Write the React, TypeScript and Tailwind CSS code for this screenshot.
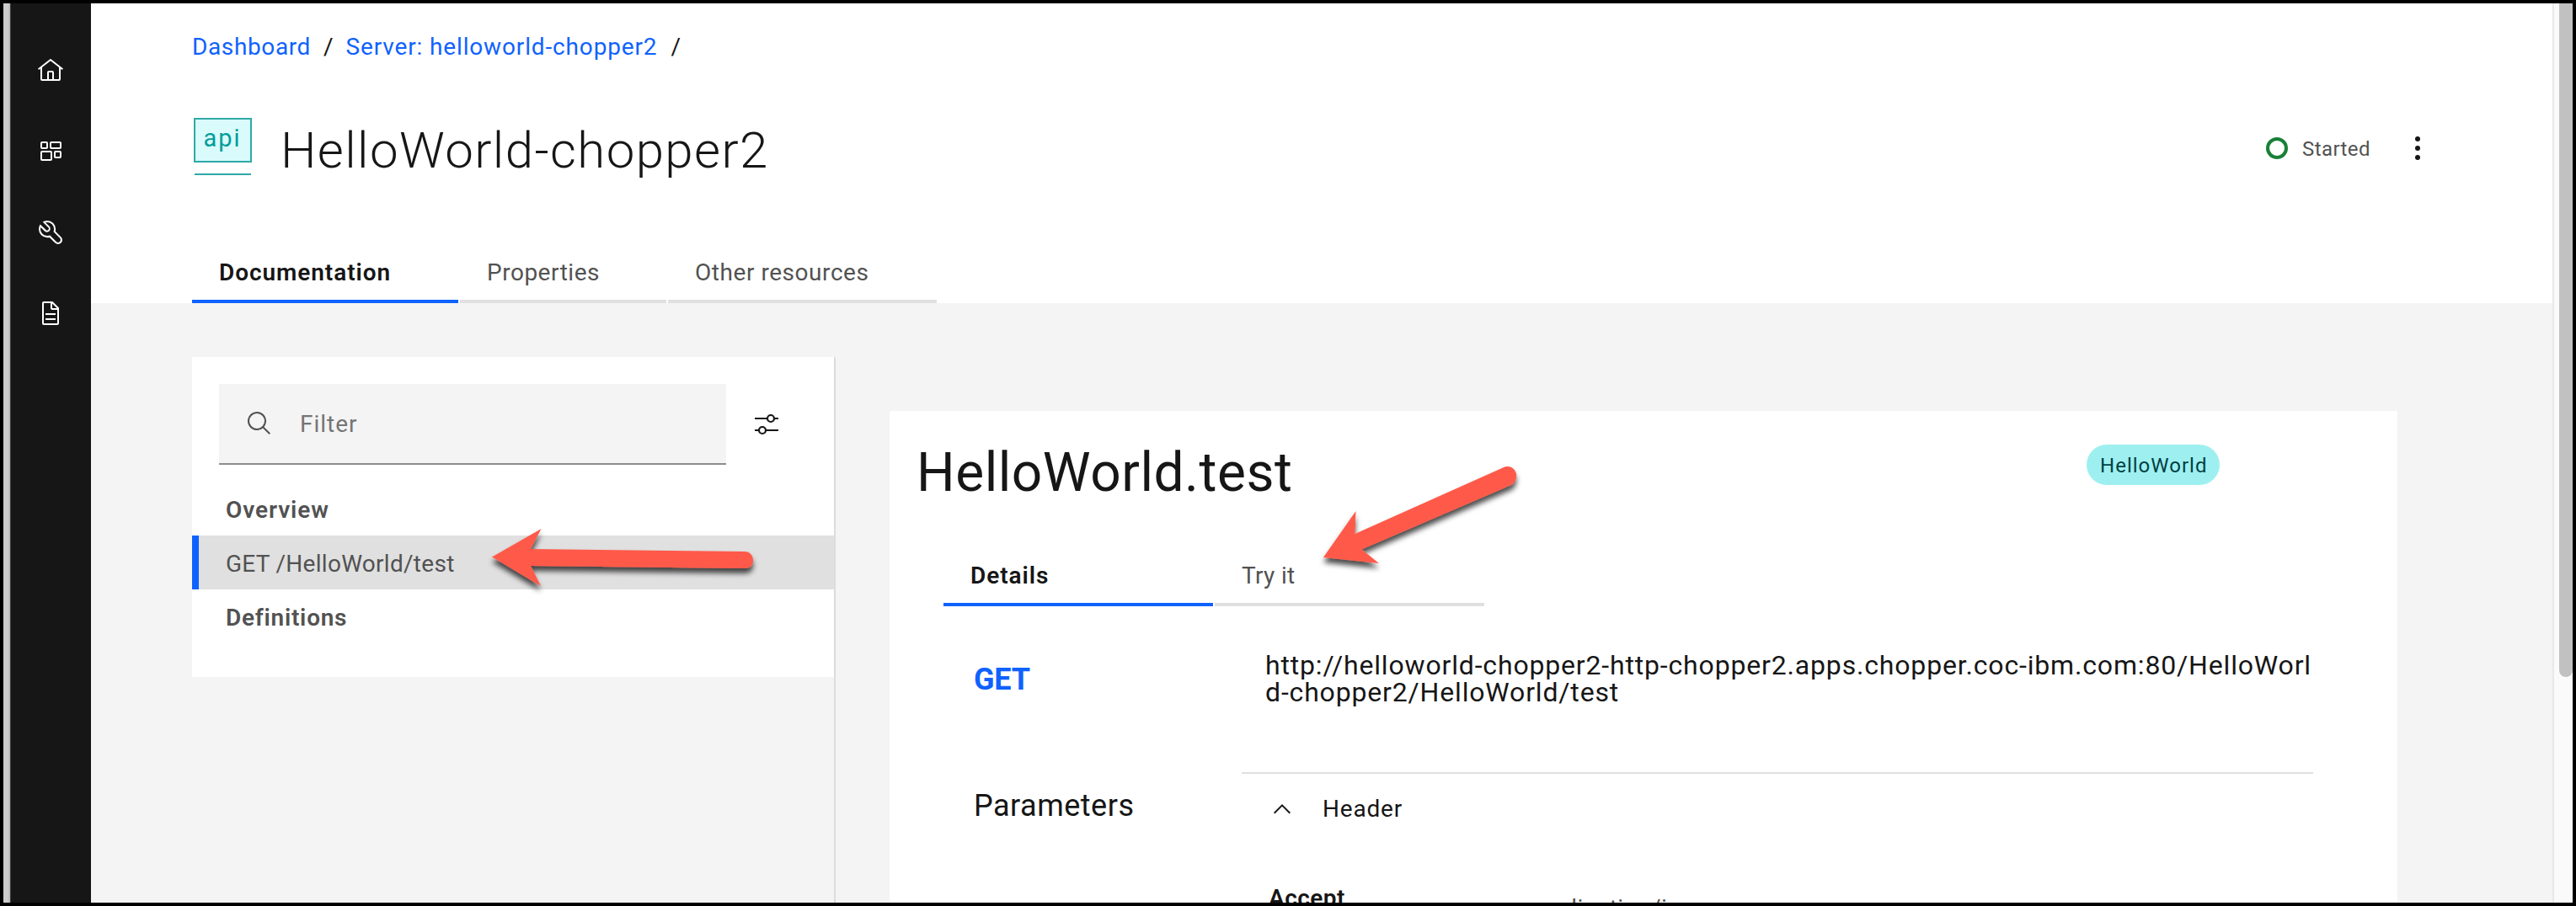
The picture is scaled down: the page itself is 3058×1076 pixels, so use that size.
import React from "react";

function Sidebar() {
  return (
    <nav className="flex w-24 shrink-0 flex-col items-center gap-16 border-l border-[#3c3c3c] bg-[#161616] pt-16 pr-px text-white">
      <svg className="size-8 shrink-0" viewBox="0 0 32 32" fill="currentColor">
        <path d="M16.6123,2.2138a1.01,1.01,0,0,0-1.2427,0L1,13.4194l1.2427,1.5717L4,13.6209V26a2.0041,2.0041,0,0,0,2,2H26a2.0037,2.0037,0,0,0,2-2V13.63L29.7573,15,31,13.4282ZM18,26H14V18h4Zm2,0V18a2.0023,2.0023,0,0,0-2-2H14a2.002,2.002,0,0,0-2,2v8H6V12.0615l10-7.79,10,7.8005V26Z" />
      </svg>
      <svg className="size-8 shrink-0" viewBox="0 0 32 32" fill="none" stroke="currentColor" strokeWidth="2">
        <rect x="5" y="5" width="7" height="7" rx="1" />
        <rect x="16" y="5" width="12" height="7" rx="1" />
        <rect x="5" y="16" width="12" height="10" rx="1" />
        <rect x="21" y="16" width="7" height="7" rx="1" />
      </svg>
      <svg className="size-8 shrink-0" viewBox="0 0 32 32" fill="currentColor">
        <path d="M12.1,2A9.8,9.8,0,0,0,6.7,3.6L13.1,10a2.1,2.1,0,0,1,.2,3,2.1,2.1,0,0,1-3-.2L3.7,6.4A9.84,9.84,0,0,0,2,12.1,10.14,10.14,0,0,0,12.1,22.2a10.9,10.9,0,0,0,2.6-.3l6.7,6.7a5,5,0,0,0,7.1-7.1l-6.7-6.7a10.9,10.9,0,0,0,.3-2.6A10,10,0,0,0,12.1,2Zm8,10.1a7.61,7.61,0,0,1-.3,2.1l-.3,1.1.8.8,6.7,6.7a2.88,2.88,0,0,1,.9,2.1A2.72,2.72,0,0,1,27,27a2.9,2.9,0,0,1-4.2,0l-6.7-6.7-.8-.8-1.1.3a7.61,7.61,0,0,1-2.1.3,8.27,8.27,0,0,1-5.7-2.3A7.63,7.63,0,0,1,4,12.1a8.33,8.33,0,0,1,.3-2.2l4.4,4.4a4.14,4.14,0,0,0,5.9.2,4.14,4.14,0,0,0-.2-5.9L10,4.2a6.45,6.45,0,0,1,2-.3,8.27,8.27,0,0,1,5.7,2.3A8.49,8.49,0,0,1,20.1,12.1Z" />
      </svg>
      <svg className="size-8 shrink-0" viewBox="0 0 32 32" fill="currentColor">
        <path d="M25.7,9.3l-7-7C18.5,2.1,18.3,2,18,2H8C6.9,2,6,2.9,6,4v24c0,1.1,0.9,2,2,2h16c1.1,0,2-0.9,2-2V10C26,9.7,25.9,9.5,25.7,9.3zM18,4.4l5.6,5.6H18V4.4zM24,28H8V4h8v6c0,1.1,0.9,2,2,2h6V28z" />
        <path d="M10 22h12v2H10zM10 16h12v2H10z" />
      </svg>
    </nav>
  );
}

function ApiBadge() {
  return (
    <div className="flex size-[72px] flex-col items-center">
      <div className="flex h-[53px] w-[69px] justify-center border-2 border-[#2fa9a6] bg-[#d9fbfb] pt-[6px] text-[29px] leading-8 tracking-[1.9px] text-[#009d9a]">
        <span>api</span>
      </div>
      <div className="mt-[13px] h-0.5 w-[67px] bg-[#2fa9a6]" />
    </div>
  );
}

function Header() {
  return (
    <header className="flex h-[356px] shrink-0 flex-col bg-white pl-[120px]">
      <div className="mt-8 flex h-10 items-center text-[28px] leading-10 text-[#0f62fe]">
        <a className="tracking-[0.62px]">Dashboard</a>
        <span className="ml-[15px] text-[#161616]">/</span>
        <a className="ml-[15px] tracking-[0.85px]">Server: helloworld-chopper2</a>
        <span className="ml-4 text-[#161616]">/</span>
      </div>
      <div className="mt-12 flex h-[104px] items-center">
        <ApiBadge />
        <h1 className="ml-[33px] pt-[5px] text-[60px] leading-[72px] font-light tracking-[1.38px]">HelloWorld-chopper2</h1>
        <div className="ml-auto flex items-center pr-[156px]">
          <span className="size-[26px] rounded-full border-4 border-[#198038]" />
          <span className="ml-[17px] w-[133px] pt-0.5 text-2xl tracking-[0.42px] text-[#525252]">Started</span>
          <svg className="h-8 w-2" viewBox="0 0 8 32" fill="#161616">
            <circle cx="4" cy="5" r="3" />
            <circle cx="4" cy="16" r="3" />
            <circle cx="4" cy="27" r="3" />
          </svg>
        </div>
      </div>
      <div className="mt-auto flex h-[72px] gap-0.5 text-[28px] leading-[64px] text-[#525252]">
        <div className="w-[316px] border-b-4 border-[#0f62fe] pt-1 pl-8 font-semibold tracking-[0.93px] text-[#161616]">Documentation</div>
        <div className="w-[245px] border-b-4 border-[#e0e0e0] pt-1 pl-8 tracking-[0.51px]">Properties</div>
        <div className="w-[319px] border-b-4 border-[#e0e0e0] pt-1 pl-8 tracking-[0.55px]">Other resources</div>
      </div>
    </header>
  );
}

function Navigator() {
  return (
    <aside className="mt-16 w-[764px] shrink-0 border-r-2 border-[#dcdcdc]">
      <div className="h-[380px] bg-white pt-8 text-[28px] text-[#525252]">
        <div className="flex items-center pl-8">
          <div className="flex h-24 w-[602px] items-center border-b-2 border-[#8d8d8d] bg-[#f4f4f4] pl-8">
            <svg className="size-8" viewBox="0 0 32 32" fill="#525252">
              <path d="M29,27.5859l-7.5521-7.5521a11.0177,11.0177,0,1,0-1.4141,1.4141L27.5859,29ZM4,13a9,9,0,1,1,9,9A9.01,9.01,0,0,1,4,13Z" />
            </svg>
            <span className="pt-px pl-8 tracking-[0.98px] text-[#757575]">Filter</span>
          </div>
          <svg className="ml-8 size-8" viewBox="0 0 32 32" fill="none" stroke="#161616" strokeWidth="2.2">
            <path d="M2 9h14M26 9h4M2 23h4M16 23h14" />
            <circle cx="21" cy="9" r="4" />
            <circle cx="11" cy="23" r="4" />
          </svg>
        </div>
        <ul className="mt-5">
          <li className="flex h-16 items-center pt-[3px] pl-10 font-semibold tracking-[0.9px]">Overview</li>
          <li className="flex h-16 items-center border-l-8 border-[#0f62fe] bg-[#e0e0e0] pt-[3px] pl-8 tracking-[0.28px]">GET /HelloWorld/test</li>
          <li className="flex h-16 items-center pt-[3px] pl-10 font-semibold tracking-[0.75px]">Definitions</li>
        </ul>
      </div>
    </aside>
  );
}

function Operation() {
  return (
    <section className="mt-32 ml-16 w-[1790px] shrink-0 bg-white pt-[34px]">
      <div className="flex h-20 pl-8">
        <h2 className="text-[64px] leading-[80px] tracking-[0.52px]">HelloWorld.test</h2>
        <span className="mt-1.5 mr-[211px] ml-auto flex h-12 w-[158px] items-center rounded-full bg-[#9ef0f0] pt-px pl-4 text-2xl tracking-[1.02px] text-[#004144]">HelloWorld</span>
      </div>
      <div className="mt-[46px] ml-16 flex h-[72px] gap-0.5 text-[28px] leading-[64px] text-[#525252]">
        <div className="w-[320px] border-b-4 border-[#0f62fe] pt-1 pl-8 font-semibold tracking-[0.95px] text-[#161616]">Details</div>
        <div className="w-[320px] border-b-4 border-[#e0e0e0] pt-1 pl-8 tracking-[0.32px]">Try it</div>
      </div>
      <div className="flex h-[197px] pl-[100px]">
        <div className="w-[318px] pt-[67px] text-4xl leading-10 font-bold tracking-[-0.2px] text-[#0f62fe]">GET</div>
        <div className="w-[1272px] pt-[54px] pl-7 text-[32px] leading-8 tracking-[0.83px]">
          http://helloworld-chopper2-http-chopper2.apps.chopper.coc-ibm.com:80/HelloWorl
          <br />
          d-chopper2/HelloWorld/test
        </div>
      </div>
      <div className="flex pl-[100px]">
        <div className="w-[318px] pt-5 text-4xl leading-10 tracking-[0.5px]">Parameters</div>
        <div className="w-[1272px] border-t-2 border-[#e0e0e0] text-[28px] leading-10">
          <div className="flex items-center pt-[22px]">
            <svg className="ml-8 size-8" viewBox="0 0 32 32" fill="#161616">
              <path d="M16 10L26 20 24.6 21.4 16 12.8 7.4 21.4 6 20z" />
            </svg>
            <span className="ml-8 tracking-[0.8px]">Header</span>
          </div>
          <div className="mt-[66px] flex pl-8">
            <span className="w-[311px] font-semibold tracking-[0.46px]">Accept</span>
            <span className="mt-3 tracking-[0.5px] text-[#525252]">application/json</span>
          </div>
        </div>
      </div>
    </section>
  );
}

function Arrows() {
  return (
    <svg className="pointer-events-none absolute inset-0 size-full" viewBox="0 0 3058 1076" fill="#ff5a4a">
      <defs>
        <filter id="shade" x="-20%" y="-30%" width="140%" height="170%">
          <feDropShadow dx="0" dy="6" stdDeviation="3" floodColor="#000" floodOpacity="0.7" />
        </filter>
      </defs>
      <path filter="url(#shade)" d="M584 661.5L642.500 628L630 652L884 655C891 655.500 894 660 894 665.500C894 671 891 675 884 675L630 672L642 696Z" />
      <path filter="url(#shade)" d="M1571 662L1609.500 607L1608.500 634L1784 555.500C1791 552 1797 555 1799.500 561C1801.500 567 1799 573 1794 576L1616.500 652.500L1637 669Z" />
    </svg>
  );
}

export default function App() {
  return (
    <div className="relative flex h-[1076px] w-full overflow-hidden border-4 border-black bg-[#f4f4f4] font-[Roboto,sans-serif] text-[#161616]">
      <div className="w-2 shrink-0 bg-linear-to-r from-[#cccccc] from-70% to-[#b4b4b4]" />
      <Sidebar />
      <main className="flex w-[2922px] shrink-0 flex-col">
        <Header />
        <div className="flex min-h-0 flex-1 pl-[120px]">
          <Navigator />
          <Operation />
        </div>
      </main>
      <div className="flex-1 border-l-2 border-[#e8e8e8] bg-[#fafafa] pl-1.5">
        <div className="h-[800px] w-4 rounded-b-full bg-[#c1c1c1]" />
      </div>
      <div className="absolute -inset-1">
        <Arrows />
      </div>
    </div>
  );
}
